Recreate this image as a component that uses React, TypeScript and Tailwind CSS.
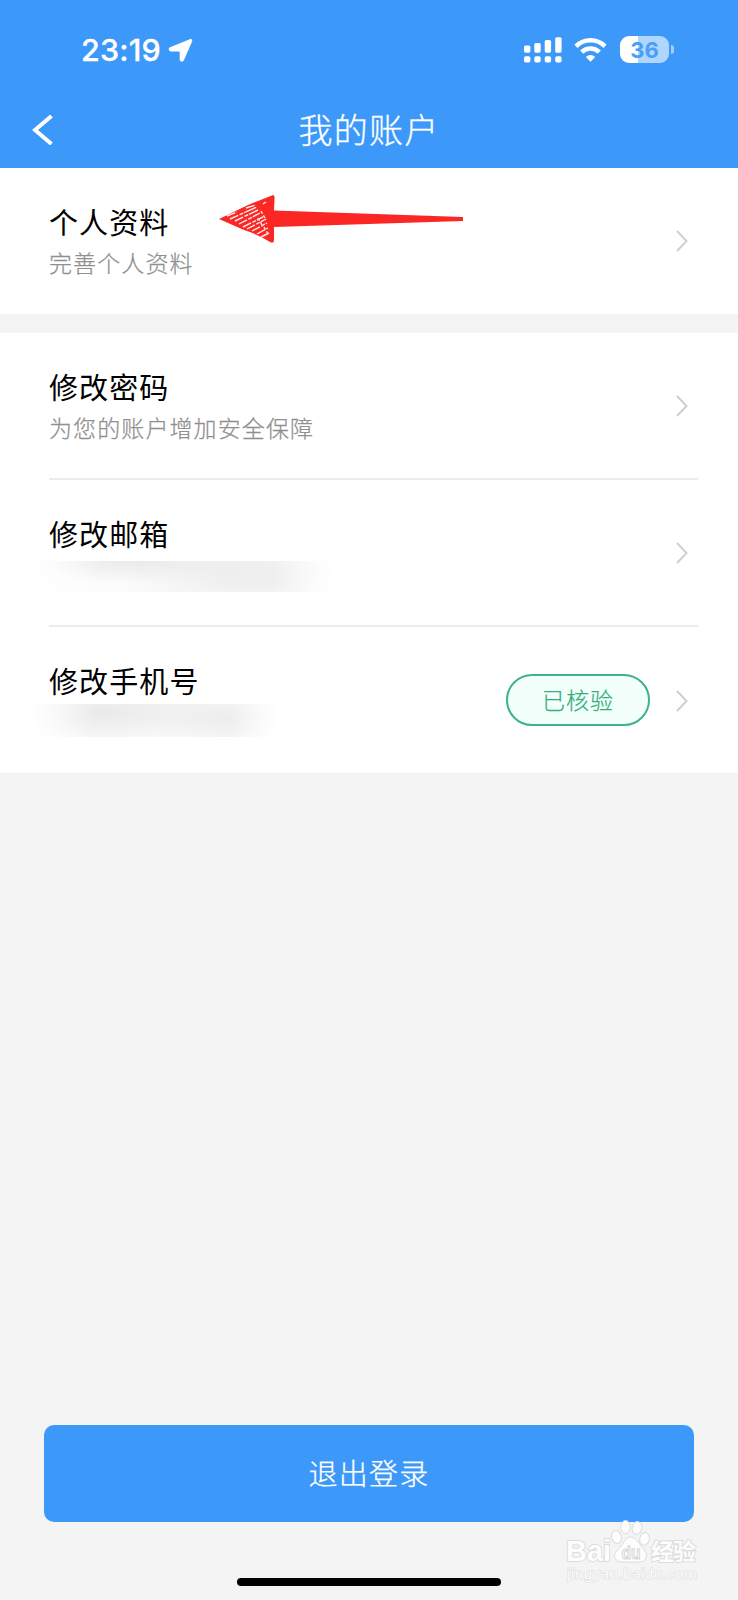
import React from 'react';

interface AccountRow {
  id: string;
  title: string;
  subtitle?: string;
  hidden?: 'email' | 'phone';
  badge?: string;
}

const securityRows: AccountRow[] = [
  { id: 'password', title: '修改密码', subtitle: '为您的账户增加安全保障' },
  { id: 'email', title: '修改邮箱', hidden: 'email' },
  { id: 'phone', title: '修改手机号', hidden: 'phone', badge: '已核验' },
];

const StatusBar: React.FC = () => (
  <div className="flex h-[100px] items-center pl-[81px] pr-[64px] text-white">
    <span className="w-[80px] whitespace-nowrap font-[Inter] text-[30.5px] font-medium leading-none tracking-[0.2px] [-webkit-text-stroke:0.3px_white]">23:19</span>
    <svg className="ml-[7px]" width="25" height="25" viewBox="0 0 25 25" fill="currentColor">
      <path d="M21.800 1.200c1.700-.7 3 .6 2.300 2.300L15.900 22.300c-.9 2.100-4.200 1.700-4.200-.8V14.600c0-.8-.4-1.200-1.200-1.200H2.900C.5 13.300 0 10.200 2 9.300z" />
    </svg>
    <svg className="ml-auto" width="39" height="26" viewBox="0 0 39 26" fill="currentColor">
      <rect x="0" y="8.500" width="6.400" height="7.200" rx="1.600" />
      <rect x="10.300" y="6" width="6.400" height="9.700" rx="1.600" />
      <rect x="20.700" y="3" width="6.400" height="12.700" rx="1.600" />
      <rect x="31.200" y="0.200" width="6.400" height="15.500" rx="1.600" />
      <rect x="0" y="19.200" width="6.400" height="6.400" rx="1.800" />
      <rect x="10.300" y="19.200" width="6.400" height="6.400" rx="1.800" />
      <rect x="20.700" y="19.200" width="6.400" height="6.400" rx="1.800" />
      <rect x="31.200" y="19.200" width="6.400" height="6.400" rx="1.800" />
    </svg>
    <svg className="ml-[11px] -mt-[2px]" width="33" height="25" viewBox="0 0 33 25" fill="none" stroke="currentColor" strokeWidth="4.500">
      <path d="M2 9.300a20.500 20.500 0 0 1 29 0" />
      <path d="M7.700 15.200a12.500 12.500 0 0 1 17.600 0" />
      <path d="M16.500 24.800l-4.700-4.800a6.700 6.700 0 0 1 9.400 0z" fill="currentColor" stroke="none" />
    </svg>
    <div className="ml-[13px] -mt-[1px] flex items-center">
      <div className="flex h-[27px] w-[49px] items-center justify-center rounded-[9px] bg-linear-to-r from-white from-[37%] to-[#b1d6fd] to-[37%]">
        <span className="font-[Inter] text-[22px] font-bold leading-none text-[#489ff6]">36</span>
      </div>
      <div className="ml-[2px] h-[9px] w-[3px] rounded-r-full bg-[#a5cffc]" />
    </div>
  </div>
);

const Chevron: React.FC = () => (
  <svg width="12" height="22" viewBox="0 0 12 22" fill="none" stroke="#cfcfcf" strokeWidth="2">
    <path d="M1 1l9.500 10L1 21" />
  </svg>
);

const HiddenValue: React.FC<{ kind: 'email' | 'phone' }> = ({ kind }) =>
  kind === 'email' ? (
    <div className="-ml-[24px] mt-[8px] h-[31px] w-[312px] bg-[radial-gradient(ellipse_130px_22px_at_110px_0px,#eaeaea,transparent),radial-gradient(ellipse_130px_46px_at_225px_14px,#efefef_20%,transparent),linear-gradient(#fafafa,#fcfcfc)] mask-[linear-gradient(to_right,transparent_2%,black_24%,black_80%,transparent)]" />
  ) : (
    <div className="-ml-[24px] mt-[4px] h-[33px] w-[256px] bg-[radial-gradient(ellipse_130px_36px_at_80px_8px,#eaeaea,transparent),radial-gradient(ellipse_80px_34px_at_204px_15px,#ededed,transparent),linear-gradient(#f8f8f8,#fcfcfc)] mask-[linear-gradient(to_right,transparent_2%,black_26%,black_80%,transparent)]" />
  );

const RowItem: React.FC<{ row: AccountRow }> = ({ row }) => (
  <div className="flex h-full items-center pr-[10px]">
    <div className="h-full flex-1 pt-[33px]">
      <h2 className="text-[29px] leading-[40px] tracking-[1.100px] text-black">{row.title}</h2>
      {row.subtitle && (
        <p className="mt-[1px] text-[23px] font-light leading-[40px] tracking-[1.100px] text-[#8f8f8f] [-webkit-text-stroke:0.25px_#8f8f8f]">
          {row.subtitle}
        </p>
      )}
      {row.hidden && <HiddenValue kind={row.hidden} />}
    </div>
    {row.badge && (
      <span className="-mt-[1px] mr-[26px] flex h-[52px] w-[144px] items-center justify-center rounded-full border-2 border-[#3fb384] bg-[#f3fffb] pb-[2px] text-[23px] font-light tracking-[1px] text-[#31b07c] [-webkit-text-stroke:0.25px_#31b07c]">
        {row.badge}
      </span>
    )}
    <Chevron />
  </div>
);

const RedArrow: React.FC = () => (
  <svg className="absolute left-[218px] top-[26px]" width="248" height="50" viewBox="0 0 248 50">
    <path d="M1 25L30 11Q45 5 55 1Q57 1 56.500 5L56 16.500L245 23V27L56 33V46Q56 50 52 48Q39 40 26 36Z" fill="#fb2724" />
    <g stroke="#ffe9e7" strokeWidth="1.400" strokeDasharray="9 1.500 4 1 13 2" fill="none">
      <path d="M9 22l10-4M12 25l27-12M17 27l23-11M21 30l21-11M25 33l20-10M29 35l19-10M34 37l15-8M39 40l11-6M43 43l8-4M28 14l10-3M45 10l3-2" />
      <path d="M43 17l5 9M40 24l4 7M46 33l4 7" strokeDasharray="3 2" />
    </g>
  </svg>
);

const Watermark: React.FC = () => (
  <svg className="absolute bottom-[12px] right-[34px]" width="140" height="72" viewBox="0 0 140 72">
    <g fill="#fdfdfd" stroke="#dcdcdc" strokeWidth="1">
      <g fontFamily="Liberation Sans" fontWeight="bold" paintOrder="stroke" strokeWidth="2">
        <text x="2" y="45" fontSize="30" textLength="45" lengthAdjust="spacingAndGlyphs">Bai</text>
        <text x="87" y="44" fontSize="23" textLength="45" fontFamily="Noto Sans CJK SC">经验</text>
      </g>
      <ellipse cx="52.500" cy="21" rx="4.800" ry="6.500" transform="rotate(-15 52.500 21)" />
      <ellipse cx="61.500" cy="11" rx="4.800" ry="6.500" />
      <ellipse cx="73" cy="12" rx="4.800" ry="6.500" transform="rotate(12 73 12)" />
      <ellipse cx="80.500" cy="23" rx="4.800" ry="6.500" transform="rotate(12 80.500 23)" />
      <path d="M66 21c5 0 8 5 11 9 4 5 7 7 5 12-2 5-7 4-15 4s-14 1-16-4c-2-5 2-7 6-12 3-4 5-9 9-9z" />
      <text x="57.500" y="43" fontSize="19" fontFamily="Liberation Sans" fontWeight="bold" fill="#f6f6f6" stroke="#d4d4d4" textLength="19" lengthAdjust="spacingAndGlyphs">du</text>
    </g>
    <text x="3" y="63" fontSize="15" fontFamily="Liberation Sans" fill="#fcfcfc" stroke="#dedede" strokeWidth="1.200" paintOrder="stroke" textLength="130">jingyan.baidu.com</text>
  </svg>
);

export default function App() {
  return (
    <div className="relative flex h-[1600px] w-[738px] flex-col overflow-hidden bg-[#f4f4f4] font-['Noto_Sans_CJK_SC',sans-serif]">
      <header className="h-[168px] shrink-0 bg-[#3c98f9]">
        <StatusBar />
        <div className="grid h-[60px] grid-cols-[60px_1fr_60px] items-center">
          <svg className="ml-[32px]" width="22" height="30" viewBox="0 0 22 30" fill="none" stroke="white" strokeWidth="4">
            <path d="M19.500 1L3 15l16.500 14" />
          </svg>
          <h1 className="-mt-[2px] text-center text-[34px] font-light leading-none tracking-[1.200px] text-white [-webkit-text-stroke:0.3px_white]">
            我的账户
          </h1>
        </div>
      </header>

      <section className="relative h-[146px] shrink-0 bg-white pl-[49px] pr-[40px]">
        <RowItem row={{ id: 'profile', title: '个人资料', subtitle: '完善个人资料' }} />
        <RedArrow />
      </section>

      <section className="mt-[19px] h-[440px] shrink-0 divide-y-2 divide-[#ececec] bg-white pl-[49px] pr-[40px]">
        {securityRows.map(row => (
          <div key={row.id} className="h-[147px]">
            <RowItem row={row} />
          </div>
        ))}
      </section>

      <button className="mx-[44px] mt-auto h-[97px] shrink-0 rounded-[10px] bg-[#3c98f9] pb-[2px] text-[29px] font-light tracking-[1.200px] text-white [-webkit-text-stroke:0.25px_white]">
        退出登录
      </button>
      <div className="mx-auto mb-[14px] mt-[56px] h-[8px] w-[264px] shrink-0 rounded-full bg-black" />
      <Watermark />
    </div>
  );
}
